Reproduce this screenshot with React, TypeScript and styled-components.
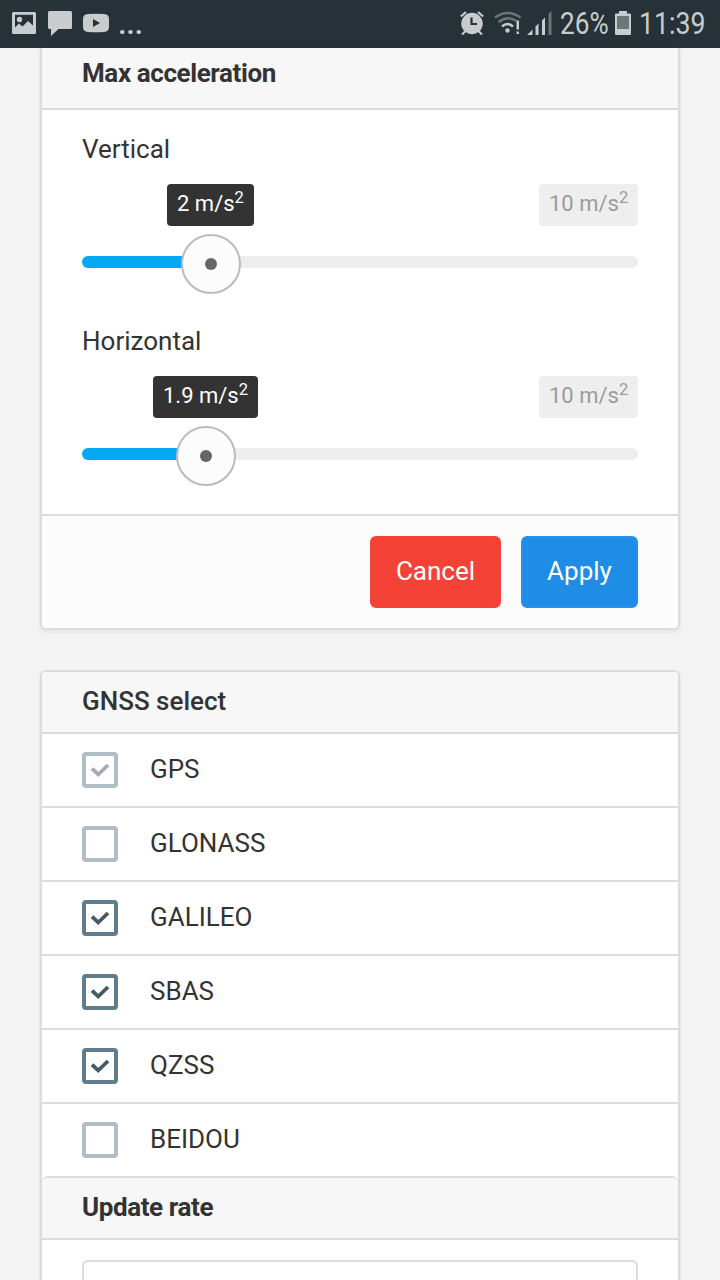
import React from 'react';
import styled, { createGlobalStyle } from 'styled-components';

const GlobalStyle = createGlobalStyle`
  * { box-sizing: border-box; }
  body {
    margin: 0;
    background: #f4f4f4;
    color: #333;
    font-family: Roboto, "Liberation Sans", sans-serif;
    font-size: 26px;
  }
`;

const Screen = styled.div`
  display: flex;
  flex-direction: column;
  width: 720px;
  height: 1280px;
  overflow: hidden;
  background: #f4f4f4;
`;

const StatusBar = styled.header`
  display: flex;
  flex: 0 0 48px;
  align-items: flex-start;
  justify-content: space-between;
  padding: 0 14px 0 12px;
  background: #273238;
  color: #c8cccf;
`;

const StatusGroup = styled.div`
  display: flex;
  height: 48px;
  align-items: flex-start;
`;

const StatusIcon = styled.svg<{ $gap?: number }>`
  display: block;
  flex: none;
  height: 48px;
  margin-right: ${(p) => p.$gap ?? 0}px;
`;

const StatusText = styled.span<{ $width: number; $squeeze?: number }>`
  width: ${(p) => p.$width}px;
  font-size: 31px;
  line-height: 48px;
  white-space: nowrap;
  transform: scaleX(${(p) => p.$squeeze ?? 1});
  transform-origin: left center;
`;

const Overflow = styled(StatusText)`
  font-weight: 500;
  letter-spacing: -0.4px;
`;

const Content = styled.main`
  display: flex;
  flex: 1;
  min-height: 0;
  flex-direction: column;
  gap: 40px;
  padding: 0 40px;
`;

const Card = styled.section<{ $continued?: boolean }>`
  flex: none;
  border: 2px solid #dcdcdc;
  border-top-width: ${(p) => (p.$continued ? 0 : 2)}px;
  border-radius: ${(p) => (p.$continued ? '0 0 6px 6px' : '6px 6px 0 0')};
  background: #fff;
  box-shadow: 0 2px 4px rgba(0, 0, 0, 0.08);
`;

const CardTitle = styled.h2<{ $tracking?: number; $weight?: number; $joined?: boolean }>`
  height: ${(p) => (p.$joined ? 64 : 62)}px;
  margin: 0;
  padding: 0 40px;
  border-bottom: 2px solid #dcdcdc;
  border-top: ${(p) => (p.$joined ? '2px solid #dcdcdc' : '0')};
  border-radius: ${(p) => (p.$joined ? '6px 6px 0 0' : '4px 4px 0 0')};
  background: #f7f7f7;
  font-size: 26px;
  font-weight: ${(p) => p.$weight ?? 700};
  letter-spacing: ${(p) => p.$tracking ?? 0}px;
  line-height: 58px;
`;

const ScrolledTitle = styled(CardTitle)`
  border-radius: 0;
  line-height: 50px;
`;

const Sliders = styled.div`
  height: 404px;
  padding: 20px 40px 0;
`;

const SliderField = styled.div`
  display: flex;
  height: 192px;
  flex-direction: column;
`;

const FieldLabel = styled.label`
  height: 38px;
  margin-bottom: 16px;
  line-height: 38px;
`;

const Bubbles = styled.div<{ $indent: number }>`
  display: flex;
  justify-content: space-between;
  height: 42px;
  margin-bottom: 8px;
  padding-left: ${(p) => p.$indent}px;
`;

const Bubble = styled.span<{ $width: number; $limit?: boolean }>`
  width: ${(p) => p.$width}px;
  padding-left: 10px;
  border-radius: 4px;
  background: ${(p) => (p.$limit ? '#eee' : '#333')};
  color: ${(p) => (p.$limit ? '#9b9b9b' : '#fff')};
  font-size: 22px;
  line-height: 39px;
  white-space: nowrap;

  sup {
    position: relative;
    top: -8px;
    font-size: 16.5px;
    line-height: 0;
    vertical-align: baseline;
  }
`;

const Track = styled.div`
  position: relative;
  height: 12px;
  margin: 22px 0 26px;
  border-radius: 6px;
  background: #eee;
`;

const Fill = styled.div<{ $to: number }>`
  width: ${(p) => p.$to}px;
  height: 12px;
  border-radius: 6px 0 0 6px;
  background: #03a9f4;
`;

const Thumb = styled.div<{ $at: number }>`
  position: absolute;
  top: -22px;
  left: ${(p) => p.$at - 30}px;
  display: flex;
  width: 60px;
  height: 60px;
  align-items: center;
  justify-content: center;
  border: 2px solid #bbb;
  border-radius: 50%;
  background: #fcfcfc;

  &::after {
    width: 12px;
    height: 12px;
    border-radius: 50%;
    background: #666;
    content: '';
  }
`;

const CardFooter = styled.footer`
  display: flex;
  height: 114px;
  justify-content: flex-end;
  gap: 20px;
  padding: 20px 40px;
  border-top: 2px solid #dcdcdc;
  border-radius: 0 0 4px 4px;
  background: #fcfcfc;
`;

const Button = styled.button<{ $width: number; $tone: 'danger' | 'primary' }>`
  width: ${(p) => p.$width}px;
  height: 72px;
  padding: 0 0 2px;
  border: 2px solid ${(p) => (p.$tone === 'danger' ? '#f44336' : '#2491ea')};
  border-radius: 6px;
  background: ${(p) => (p.$tone === 'danger' ? '#f44336' : '#1f8ce6')};
  color: #fff;
  font: 400 26px Roboto, "Liberation Sans", sans-serif;
`;

const Options = styled.ul`
  margin: 0;
  padding: 0;
  list-style: none;
`;

const Option = styled.li`
  display: flex;
  height: 74px;
  align-items: center;
  gap: 32px;
  padding: 0 40px;
  border-bottom: 2px solid #dcdcdc;

  &:last-child {
    height: 72px;
    border-bottom: 0;
  }
`;

const OptionText = styled.span`
  padding-bottom: 2px;
`;

const CheckBox = styled.span<{ $strong: boolean }>`
  display: flex;
  width: 36px;
  height: 36px;
  align-items: center;
  justify-content: center;
  border: 4px solid ${(p) => (p.$strong ? '#607d8b' : '#b0bec5')};
  border-radius: 4px;
  color: ${(p) => (p.$strong ? '#455a64' : '#a2adb2')};
`;

const RateBody = styled.div`
  padding: 20px 40px;
`;

const RateInput = styled.div`
  height: 72px;
  border: 2px solid #dcdcdc;
  border-radius: 6px;
`;

type SliderProps = {
  label: string;
  value: string;
  at: number;
  indent: number;
  width: number;
};

function Slider({ label, value, at, indent, width }: SliderProps) {
  return (
    <SliderField>
      <FieldLabel>{label}</FieldLabel>
      <Bubbles $indent={indent}>
        <Bubble $width={width}>{value} m/s<sup>2</sup></Bubble>
        <Bubble $width={99} $limit>10 m/s<sup>2</sup></Bubble>
      </Bubbles>
      <Track>
        <Fill $to={at} />
        <Thumb $at={at} />
      </Track>
    </SliderField>
  );
}

const systems = [
  { name: 'GPS', checked: true, disabled: true },
  { name: 'GLONASS', checked: false },
  { name: 'GALILEO', checked: true },
  { name: 'SBAS', checked: true },
  { name: 'QZSS', checked: true },
  { name: 'BEIDOU', checked: false },
];

function Notifications() {
  return (
    <StatusGroup>
      <StatusIcon width="24" viewBox="0 0 24 48" $gap={12}>
        <path fill="currentColor" fillRule="evenodd" d="M1.5 12h21q1.5 0 1.5 1.5v19q0 1.5-1.5 1.5h-21Q0 34 0 32.500v-19Q0 12 1.500 12zM3 14.800v12.700l4-4 3.500 3 5.500-5.500 5 4.500V14.800z" />
        <circle cx="7.500" cy="19.500" r="2.700" fill="currentColor" />
      </StatusIcon>
      <StatusIcon width="24" viewBox="0 0 24 48" $gap={11}>
        <path fill="currentColor" d="M1.500 11h21q1.500 0 1.500 1.500v15q0 1.500-1.500 1.500H10.500L3 36v-7H1.500Q0 29 0 27.500v-15Q0 11 1.500 11z" />
      </StatusIcon>
      <StatusIcon width="26" viewBox="0 0 26 48" $gap={9}>
        <path fill="currentColor" fillRule="evenodd" d="M5 14Q13 13.400 21 14q5 .2 5 5v8q0 4.500-5 5-8 .5-16 0-5-.5-5-5v-8q0-4.800 5-5zM10 19v8l7-4z" />
      </StatusIcon>
      <Overflow $width={24}>...</Overflow>
    </StatusGroup>
  );
}

function SystemStatus() {
  return (
    <StatusGroup>
      <StatusIcon width="24" viewBox="0 0 24 48" $gap={10}>
        <circle cx="12" cy="23.500" r="10.700" fill="currentColor" />
        <path fill="none" stroke="currentColor" strokeWidth="2.200" d="M.8 16.500 6 12M23.200 16.500 18 12M2 34.500l4-4M22 34.500l-4-4" />
        <path fill="none" stroke="#273238" strokeWidth="2.200" d="M11.500 17.500V24H17" />
      </StatusIcon>
      <StatusIcon width="28" viewBox="0 0 28 48" $gap={5}>
        <g fill="none" strokeWidth="2.400">
          <path stroke="#6b757a" d="M1 17.500Q13.500 8.500 26.500 17.500M4.500 22.200Q13.500 15 22.500 21" />
          <path stroke="currentColor" d="M8 26.500Q13.500 21.500 19 26.500" />
        </g>
        <circle cx="13.500" cy="30.500" r="2.200" fill="currentColor" />
        <path fill="currentColor" d="M22.500 20.500H25v9h-2.500zM22.500 31.500H25V34h-2.500z" />
      </StatusIcon>
      <StatusIcon width="25" viewBox="0 0 25 48" $gap={8}>
        <path fill="currentColor" d="M0 35l5.500-5.500V35zM8.500 26.500l3-3V35h-3zM15 20.500l3-3V35h-3z" />
        <path fill="#6b757a" d="M21.500 14l3-3v24h-3z" />
      </StatusIcon>
      <StatusText $width={55} $squeeze={0.845}>26%</StatusText>
      <StatusIcon width="16" viewBox="0 0 16 48" $gap={8}>
        <path fill="currentColor" d="M4 11h8v2.500h3q1 0 1 1V34q0 1-1 1H1q-1 0-1-1V14.500q0-1 1-1h3z" />
        <path fill="#6b757a" d="M2 16h12v13H2z" />
      </StatusIcon>
      <StatusText $width={67} $squeeze={0.86}>11:39</StatusText>
    </StatusGroup>
  );
}

export default function App() {
  return (
    <Screen>
      <GlobalStyle />
      <StatusBar>
        <Notifications />
        <SystemStatus />
      </StatusBar>
      <Content>
        <Card $continued>
          <ScrolledTitle $tracking={-0.4}>Max acceleration</ScrolledTitle>
          <Sliders>
            <Slider label="Vertical" value="2" at={129} indent={85} width={87} />
            <Slider label="Horizontal" value="1.9" at={124} indent={71} width={105} />
          </Sliders>
          <CardFooter>
            <Button $width={131} $tone="danger">Cancel</Button>
            <Button $width={117} $tone="primary">Apply</Button>
          </CardFooter>
        </Card>
        <Card>
          <CardTitle $weight={500}>GNSS select</CardTitle>
          <Options>
            {systems.map(({ name, checked, disabled }) => (
              <Option key={name}>
                <CheckBox $strong={checked && !disabled}>
                  {checked && (
                    <svg width="20" height="16" viewBox="0 0 20 16">
                      <path d="M2 6.700l6.200 5.800L18 3" fill="none" stroke="currentColor" strokeWidth="3.800" />
                    </svg>
                  )}
                </CheckBox>
                <OptionText>{name}</OptionText>
              </Option>
            ))}
          </Options>
          <CardTitle $joined $tracking={-0.4}>Update rate</CardTitle>
          <RateBody>
            <RateInput />
          </RateBody>
        </Card>
      </Content>
    </Screen>
  );
}
